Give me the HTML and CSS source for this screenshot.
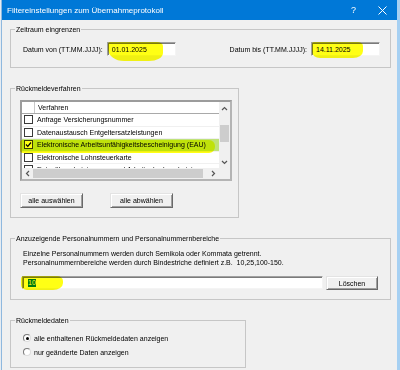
FILE: index.html
```html
<!DOCTYPE html>
<html lang="de">
<head>
    <meta charset="UTF-8">
    <meta name="viewport" content="width=device-width, initial-scale=1.0">
    <title>Filtereinstellungen</title>
    <link rel="stylesheet" href="styles.css">
</head>
<body>
<div class="desk">
    <div class="rand-links"></div>
    <div class="fenster">
        <!-- Titelleiste -->
        <div class="titel">
            <span class="titel-text">Filtereinstellungen zum Übernahmeprotokoll</span>
            <span class="titel-knopf">?</span>
            <span class="titel-knopf">
                <svg width="9" height="9" viewBox="0 0 9 9"><path d="M0.5 0.5 L8.5 8.5 M8.5 0.5 L0.5 8.5" stroke="#fff" stroke-width="1"/></svg>
            </span>
        </div>

        <div class="inhalt">
            <!-- Zeitraum -->
            <fieldset class="rahmen zeitraum">
                <legend>Zeitraum eingrenzen</legend>
                <div class="rahmen-inhalt datum-zeile">
                    <div class="datum-feld">
                        <span class="datum-label">Datum von (TT.MM.JJJJ):</span>
                        <div class="textfeld datum">01.01.2025<span class="marker m-von"></span></div>
                    </div>
                    <div class="datum-feld">
                        <span class="datum-label">Datum bis (TT.MM.JJJJ):</span>
                        <div class="textfeld datum">14.11.2025<span class="marker m-bis"></span></div>
                    </div>
                </div>
            </fieldset>

            <!-- Rückmeldeverfahren -->
            <fieldset class="rahmen verfahren">
                <legend>Rückmeldeverfahren</legend>
                <div class="rahmen-inhalt">
                    <div class="liste">
                        <div class="liste-inhalt">
                            <div class="liste-kopf"><span class="spalte-check"></span><span class="spalte-text">Verfahren</span></div>
                            <div class="liste-zeile"><span class="spalte-check"><span class="kasten"></span></span><span class="spalte-text">Anfrage Versicherungsnummer</span></div>
                            <div class="liste-zeile"><span class="spalte-check"><span class="kasten"></span></span><span class="spalte-text">Datenaustausch Entgeltersatzleistungen</span></div>
                            <div class="liste-zeile aktiv"><span class="spalte-check"><span class="kasten"><svg width="7" height="7" viewBox="0 0 7 7"><polyline points="1,3.5 2.8,5.3 6,1.5" fill="none" stroke="#000" stroke-width="1.2"/></svg></span></span><span class="spalte-text">Elektronische Arbeitsunfähigkeitsbescheinigung (EAU)</span></div>
                            <div class="liste-zeile"><span class="spalte-check"><span class="kasten"></span></span><span class="spalte-text">Elektronische Lohnsteuerkarte</span></div>
                            <div class="liste-zeile"><span class="spalte-check"><span class="kasten"></span></span><span class="spalte-text">Entgeltbescheinigungen und Arbeitgeberbescheinigungen</span></div>
                        </div>
                        <div class="scroll-v">
                            <span class="pfeil">
                                <svg width="7" height="5" viewBox="0 0 7 5"><polyline points="1,4 3.5,1.5 6,4" fill="none" stroke="#555" stroke-width="1.2"/></svg>
                            </span>
                            <span class="daumen-v"></span>
                            <span class="pfeil">
                                <svg width="7" height="5" viewBox="0 0 7 5"><polyline points="1,1 3.5,3.5 6,1" fill="none" stroke="#555" stroke-width="1.2"/></svg>
                            </span>
                        </div>
                        <div class="scroll-h">
                            <span class="pfeil">
                                <svg width="5" height="7" viewBox="0 0 5 7"><polyline points="4,1 1.5,3.5 4,6" fill="none" stroke="#555" stroke-width="1.2"/></svg>
                            </span>
                            <span class="daumen-h"></span>
                            <span class="pfeil">
                                <svg width="5" height="7" viewBox="0 0 5 7"><polyline points="1,1 3.5,3.5 1,6" fill="none" stroke="#555" stroke-width="1.2"/></svg>
                            </span>
                        </div>
                        <div class="scroll-ecke"></div>
                        <span class="marker m-eau"></span>
                    </div>
                    <div class="knopf-zeile">
                        <span class="knopf breit">alle auswählen</span>
                        <span class="knopf breit">alle abwählen</span>
                    </div>
                </div>
            </fieldset>

            <!-- Personalnummern -->
            <fieldset class="rahmen nummern">
                <legend>Anzuzeigende Personalnummern und Personalnummernbereiche</legend>
                <div class="rahmen-inhalt">
                    <p class="hinweis">Einzelne Personalnummern werden durch Semikola oder Kommata getrennt.<br>Personalnummernbereiche werden durch Bindestriche definiert z.B.&nbsp; 10,25,100-150.</p>
                    <div class="nummer-zeile">
                        <div class="textfeld nummer"><span class="auswahl">10</span><span class="marker m-nr"></span></div>
                        <span class="knopf loeschen">Löschen</span>
                    </div>
                </div>
            </fieldset>

            <!-- Rückmeldedaten -->
            <fieldset class="rahmen daten">
                <legend>Rückmeldedaten</legend>
                <div class="rahmen-inhalt">
                    <div class="option"><span class="radio an"></span>alle enthaltenen Rückmeldedaten anzeigen</div>
                    <div class="option"><span class="radio"></span>nur geänderte Daten anzeigen</div>
                </div>
            </fieldset>
        </div>
    </div>
    <div class="rand-rechts"></div>
</div>
</body>
</html>
```

FILE: styles.css
```css
body {
    margin: 0;
    padding: 0;
    width: 400px;
    height: 370px;
    overflow: hidden;
    background-color: #f0f0f0;
    font-family: "Liberation Sans", Arial, sans-serif;
    font-size: 7px;
    color: #000;
}

.desk {
    display: flex;
    height: 370px;
}

.rand-links {
    width: 1px;
    background-color: #e6ecf2;
    border-right: 1px solid #8fb8de;
}
.rand-rechts {
    width: 3px;
    background-color: #a6d0f2;
}

.fenster {
    width: 395px;
    display: flex;
    flex-direction: column;
    background-color: #f0f0f0;
}

/* Titelleiste */
.titel {
    height: 20px;
    flex-shrink: 0;
    background-color: #0078d7;
    color: #fff;
    display: flex;
    align-items: center;
    padding-left: 5px;
    font-size: 8px;
}
.titel-text {
    flex: 1;
}
.titel-knopf {
    width: 29px;
    display: flex;
    justify-content: center;
    align-items: center;
    font-size: 9px;
}

.inhalt {
    padding: 5px 0 0 8px;
}

/* Rahmen (Gruppenfelder) */
.rahmen {
    margin: 0;
    padding: 0;
    min-width: 0;
    box-sizing: border-box;
    border: 1px solid #c6c6c6;
}
.rahmen legend {
    margin-left: 4px;
    padding: 0 1px;
    line-height: 9px;
}
.rahmen + .rahmen {
    margin-top: 16px;
}
.zeitraum { width: 381px; }
.verfahren { width: 229px; }
.nummern { width: 381px; }
.daten { width: 236px; }

.zeitraum .rahmen-inhalt { padding: 8px 10px 11px 12px; }
.verfahren .rahmen-inhalt { padding: 7px 9px 9px 9px; }
.nummern .rahmen-inhalt { padding: 6px 12px 9px 11px; }
.daten .rahmen-inhalt { padding: 6px 10px 8px 12px; }

/* Datum */
.datum-zeile {
    display: flex;
    justify-content: space-between;
    align-items: center;
}
.datum-feld {
    display: flex;
    align-items: center;
    gap: 4px;
}

.textfeld {
    position: relative;
    box-sizing: border-box;
    background-color: #fff;
    border: 1px solid;
    border-color: #a0a0a0 #f4f4f4 #f4f4f4 #a0a0a0;
    box-shadow: inset 1px 1px #7a7a7a;
    display: flex;
    align-items: center;
}
.datum {
    width: 69px;
    height: 14px;
    padding-left: 4px;
}
.nummer {
    width: 301px;
    height: 13px;
    padding-left: 5px;
}
.auswahl {
    background-color: #0078d7;
    color: #fff;
    line-height: 8px;
}

/* Textmarker */
.marker {
    position: absolute;
    background-color: #ffff00;
    mix-blend-mode: multiply;
    opacity: 0.92;
}
.m-von {
    left: 0;
    top: -1px;
    width: 55px;
    height: 19px;
    border-radius: 2px 6px 14px 16px / 2px 4px 8px 12px;
}
.m-bis {
    left: 0;
    top: -1px;
    width: 51px;
    height: 16px;
    border-radius: 2px 5px 10px 8px / 2px 4px 7px 6px;
}
.m-nr {
    left: -2px;
    top: -1px;
    width: 42px;
    height: 14px;
    border-radius: 3px 6px 10px 6px / 3px 5px 7px 5px;
}
.m-eau {
    left: -2px;
    top: 38px;
    width: 195px;
    height: 13px;
    border-radius: 2px 6px 6px 3px;
}

/* Liste */
.liste {
    position: relative;
    width: 212px;
    height: 81px;
    box-sizing: border-box;
    border: 2px solid;
    border-color: #9c9c9c #b4b4b4 #b4b4b4 #9c9c9c;
    background-color: #fff;
    display: grid;
    grid-template-columns: 197px 11px;
    grid-template-rows: 66px 11px;
}
.liste-inhalt {
    overflow: hidden;
}
.liste-kopf {
    height: 11px;
    display: flex;
    align-items: center;
    border-bottom: 1px solid #a9a9a9;
}
.liste-kopf .spalte-check {
    align-self: stretch;
    border-right: 1px solid #c8c8c8;
}
.liste-zeile {
    height: 12.5px;
    box-sizing: border-box;
    display: flex;
    align-items: center;
    border-bottom: 1px solid #f0f0f0;
    white-space: nowrap;
}
.liste-zeile.aktiv {
    background-color: #bfe27a;
}
.spalte-check {
    width: 12px;
    flex-shrink: 0;
    display: flex;
    justify-content: center;
}
.spalte-text {
    padding-left: 3px;
    white-space: nowrap;
}
.kasten {
    width: 9px;
    height: 9px;
    box-sizing: border-box;
    border: 1px solid #3a3a3a;
    background-color: #fff;
    display: flex;
    align-items: center;
    justify-content: center;
}

.scroll-v {
    background-color: #f0f0f0;
    display: flex;
    flex-direction: column;
    align-items: center;
}
.scroll-v .pfeil {
    height: 12px;
    display: flex;
    align-items: center;
}
.daumen-v {
    width: 9px;
    height: 17px;
    margin: 11px 0 14px 0;
    background-color: #cdcdcd;
}
.scroll-h {
    background-color: #f0f0f0;
    display: flex;
    align-items: center;
}
.scroll-h .pfeil {
    width: 11px;
    display: flex;
    justify-content: center;
}
.daumen-h {
    width: 170px;
    height: 9px;
    margin-right: 5px;
    background-color: #cdcdcd;
}
.scroll-ecke {
    background-color: #f0f0f0;
}

/* Knöpfe */
.knopf {
    box-sizing: border-box;
    height: 15px;
    display: flex;
    align-items: center;
    justify-content: center;
    background-color: #f0f0f0;
    border: 1px solid;
    border-color: #e3e3e3 #696969 #696969 #e3e3e3;
    box-shadow: inset 1px 1px #fff, inset -1px -1px #a0a0a0;
}
.knopf-zeile {
    display: flex;
    gap: 27px;
    margin-top: 12px;
}
.breit {
    width: 63px;
}
.loeschen {
    width: 52px;
    height: 14px;
}

.hinweis {
    margin: 0 0 9px 1px;
    line-height: 9px;
}
.nummer-zeile {
    display: flex;
    gap: 3px;
}

/* Optionsfelder */
.option {
    height: 14px;
    display: flex;
    align-items: center;
    gap: 3px;
}
.radio {
    position: relative;
    width: 8px;
    height: 8px;
    box-sizing: border-box;
    border-radius: 50%;
    border: 1px solid;
    border-color: #7a7a7a #dcdcdc #dcdcdc #7a7a7a;
    background-color: #fff;
}
.radio.an::after {
    content: "";
    position: absolute;
    left: 1.5px;
    top: 1.5px;
    width: 3px;
    height: 3px;
    border-radius: 50%;
    background-color: #000;
}
```
